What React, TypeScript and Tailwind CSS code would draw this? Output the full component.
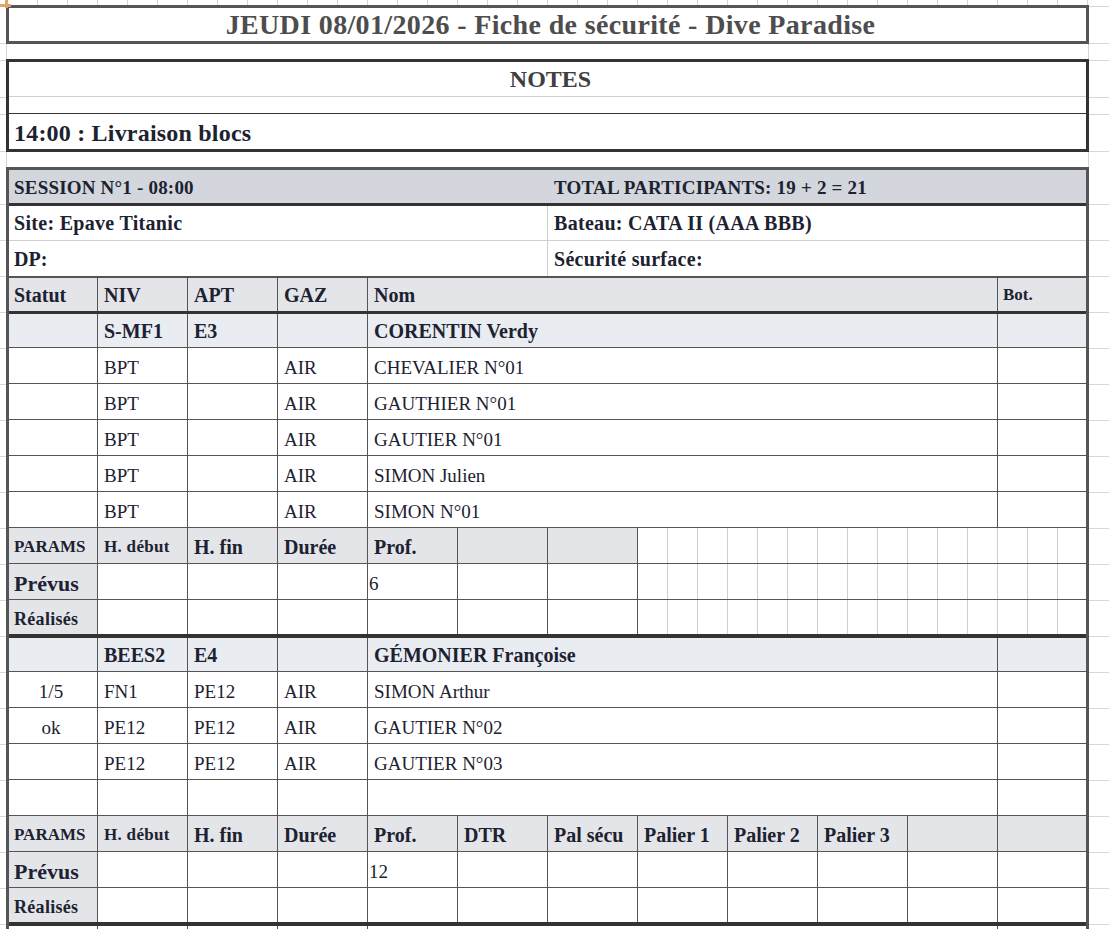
import React from 'react'

type Cell = {
  text?: string
  span?: number
  cls?: string
  grid?: boolean
}

const spans: Record<number, string> = {
  1: 'col-span-1',
  2: 'col-span-2',
  5: 'col-span-5',
  6: 'col-span-6',
  7: 'col-span-7',
}

const GRAY = 'bg-[#e4e5e9]'
const MON = 'bg-[#e9ecf1]'

// 15 petites cellules claires (colonnes de 30px du tableur)
const LightGrid = () => (
  <div className="flex h-full w-full">
    {Array.from({ length: 15 }).map((_, i) => (
      <div key={i} className={i < 14 ? 'w-[30px] shrink-0 border-r border-[#cfcfcf]' : 'flex-1'} />
    ))}
  </div>
)

const Row = ({ cells, className }: { cells: Cell[]; className: string }) => (
  <div className={`grid grid-cols-[89px_repeat(10,90px)_88px] ${className}`}>
    {cells.map((c, i) => (
      <div
        key={i}
        className={`${spans[c.span ?? 1]} flex min-w-0 items-center overflow-hidden whitespace-nowrap ${
          i < cells.length - 1 ? 'border-r border-[#555]' : ''
        } ${c.grid ? '' : c.cls ?? 'pl-[6px]'}`}
      >
        {c.grid ? <LightGrid /> : c.text}
      </div>
    ))}
  </div>
)

const b = 'font-bold text-[20px]'
const r = 'text-[19px] pt-[6px]'

const person = (statut: string, niv: string, apt: string, gaz: string, nom: string): Cell[] => [
  { text: statut, cls: `${r} justify-center pr-[4px]` },
  { text: niv, cls: `${r} pl-[6px]` },
  { text: apt, cls: `${r} pl-[6px]` },
  { text: gaz, cls: `${r} pl-[6px]` },
  { text: nom, span: 7, cls: `${r} pl-[6px]` },
  { text: '' },
]

const moniteur = (niv: string, apt: string, nom: string): Cell[] => [
  { text: '' },
  { text: niv, cls: `${b} pl-[6px]` },
  { text: apt, cls: `${b} pl-[6px]` },
  { text: '' },
  { text: nom, span: 7, cls: `${b} pl-[6px]` },
  { text: '' },
]

const rowCls = 'h-[36px] border-b border-[#555]'
const prevus = `pl-[5px] pt-[4px] font-bold text-[22px] ${GRAY}`
const realises = `pl-[5px] pt-[4px] font-bold text-[18px] tracking-[0.3px] ${GRAY}`

export default function App() {
  return (
    <div className="relative h-[929px] w-[1109px] overflow-hidden bg-white font-['Liberation_Serif',serif] text-[#1c2230]">
      {/* marque de sélection */}
      <div className="absolute left-[5px] top-0 h-[8px] w-[3px] bg-[#e0a56c]" />
      <div className="absolute left-0 top-[4px] h-[3px] w-[11px] bg-[#e0a56c]" />

      {/* bande du haut avec le quadrillage */}
      <div className="h-[5px] [background-image:linear-gradient(to_right,#d4d4d4_1px,transparent_1px)] [background-size:30px_100%] [background-position:7px_0]" />

      {/* Titre + notes */}
      <div className="flex">
        <div className="w-[6px] [background-image:repeating-linear-gradient(to_bottom,#d6d6d6_0_1px,transparent_1px_37px,#d6d6d6_37px_38px,transparent_38px_54px)] [background-position:0_1px]" />
        <div className="flex w-[1083px] flex-col">
          <div className="flex h-[39px] items-center justify-center border-[3px] border-[#555] pl-[6px] text-[28px] font-bold tracking-[0.35px] text-[#4d4d4d]">
            JEUDI 08/01/2026 - Fiche de sécurité - Dive Paradise
          </div>
          <div className="h-[15px] border-x border-[#d6d6d6]" />
          <div className="flex flex-col border-[3px] border-[#333]">
            <div className="flex h-[35px] items-center justify-center border-b border-[#cfcfcf] pl-[6px] text-[24px] font-bold text-[#3f3f3f]">
              NOTES
            </div>
            <div className="h-[17px] border-b border-[#333]" />
            <div className="flex h-[35px] items-center pl-[5px] pt-[2px] text-[24px] font-bold tracking-[0.2px]">
              14:00 : Livraison blocs
            </div>
          </div>
          <div className="h-[15px] border-x border-[#d6d6d6]" />
        </div>
        <div className="flex-1 [background-image:repeating-linear-gradient(to_bottom,#d6d6d6_0_1px,transparent_1px_37px,#d6d6d6_37px_38px,transparent_38px_54px)] [background-position:0_1px]" />
      </div>

      {/* Session */}
      <div className="flex">
        <div className="w-[6px] [background-image:repeating-linear-gradient(to_bottom,transparent_0_35px,#d6d6d6_35px_36px)] [background-position:0_2px]" />
        <div className="w-[1083px] border-x-[3px] border-t-[3px] border-[#555]">
          <Row
            className="h-[36px] border-b-[3px] border-[#333] bg-[#d3d6dc]"
            cells={[
              { text: 'SESSION N°1 - 08:00', span: 6, cls: 'pl-[5px] pt-[4px] font-bold text-[19px] tracking-[0.2px] !border-r-0' },
              { text: 'TOTAL PARTICIPANTS: 19 + 2 = 21', span: 6, cls: 'pl-[6px] pt-[4px] font-bold text-[19px] tracking-[0.2px]' },
            ]}
          />
          <Row
            className="h-[35px] border-b border-[#cfcfcf]"
            cells={[
              { text: 'Site: Epave Titanic', span: 6, cls: `pl-[5px] ${b} tracking-[0.3px] !border-[#cfcfcf]` },
              { text: 'Bateau: CATA II (AAA BBB)', span: 6, cls: `pl-[6px] ${b} tracking-[0.3px]` },
            ]}
          />
          <Row
            className="h-[37px] border-b-2 border-[#555]"
            cells={[
              { text: 'DP:', span: 6, cls: `pl-[5px] ${b} !border-[#cfcfcf]` },
              { text: 'Sécurité surface:', span: 6, cls: `pl-[6px] ${b} tracking-[0.3px]` },
            ]}
          />
          <Row
            className={`h-[36px] border-b-[3px] border-[#333] ${GRAY}`}
            cells={[
              { text: 'Statut', cls: `pl-[5px] ${b}` },
              { text: 'NIV', cls: `pl-[6px] ${b}` },
              { text: 'APT', cls: `pl-[6px] ${b}` },
              { text: 'GAZ', cls: `pl-[6px] ${b}` },
              { text: 'Nom', span: 7, cls: `pl-[6px] ${b}` },
              { text: 'Bot.', cls: 'pl-[5px] font-bold text-[17px]' },
            ]}
          />

          {/* Palanquée 1 */}
          <Row className={`h-[34px] border-b border-[#555] ${MON}`} cells={moniteur('S-MF1', 'E3', 'CORENTIN Verdy')} />
          <Row className={rowCls} cells={person('', 'BPT', '', 'AIR', 'CHEVALIER N°01')} />
          <Row className={rowCls} cells={person('', 'BPT', '', 'AIR', 'GAUTHIER N°01')} />
          <Row className={rowCls} cells={person('', 'BPT', '', 'AIR', 'GAUTIER N°01')} />
          <Row className={rowCls} cells={person('', 'BPT', '', 'AIR', 'SIMON Julien')} />
          <Row className={rowCls} cells={person('', 'BPT', '', 'AIR', 'SIMON N°01')} />
          <Row
            className={rowCls}
            cells={[
              { text: 'PARAMS', cls: `pl-[5px] pt-[2px] font-bold text-[17px] ${GRAY}` },
              { text: 'H. début', cls: `pl-[6px] pt-[2px] font-bold text-[17px] tracking-[0.3px] ${GRAY}` },
              { text: 'H. fin', cls: `pl-[6px] pt-[2px] ${b} ${GRAY}` },
              { text: 'Durée', cls: `pl-[6px] pt-[2px] ${b} ${GRAY}` },
              { text: 'Prof.', cls: `pl-[6px] pt-[2px] ${b} ${GRAY}` },
              { text: '', cls: GRAY },
              { text: '', cls: GRAY },
              { span: 5, grid: true },
            ]}
          />
          <Row
            className={rowCls}
            cells={[
              { text: 'Prévus', cls: prevus },
              { text: '' },
              { text: '' },
              { text: '' },
              { text: '6', cls: 'pl-[1px] pt-[6px] text-[19px]' },
              { text: '' },
              { text: '' },
              { span: 5, grid: true },
            ]}
          />
          <Row
            className="h-[38px] border-b-4 border-[#333]"
            cells={[
              { text: 'Réalisés', cls: realises },
              { text: '' },
              { text: '' },
              { text: '' },
              { text: '' },
              { text: '' },
              { text: '' },
              { span: 5, grid: true },
            ]}
          />

          {/* Palanquée 2 */}
          <Row className={`h-[34px] border-b border-[#555] ${MON}`} cells={moniteur('BEES2', 'E4', 'GÉMONIER Françoise')} />
          <Row className={rowCls} cells={person('1/5', 'FN1', 'PE12', 'AIR', 'SIMON Arthur')} />
          <Row className={rowCls} cells={person('ok', 'PE12', 'PE12', 'AIR', 'GAUTIER N°02')} />
          <Row className={rowCls} cells={person('', 'PE12', 'PE12', 'AIR', 'GAUTIER N°03')} />
          <Row className={rowCls} cells={person('', '', '', '', '')} />
          <Row
            className={`${rowCls} ${GRAY}`}
            cells={[
              { text: 'PARAMS', cls: 'pl-[5px] pt-[2px] font-bold text-[17px]' },
              { text: 'H. début', cls: 'pl-[6px] pt-[2px] font-bold text-[17px] tracking-[0.3px]' },
              { text: 'H. fin', cls: `pl-[6px] pt-[2px] ${b}` },
              { text: 'Durée', cls: `pl-[6px] pt-[2px] ${b}` },
              { text: 'Prof.', cls: `pl-[6px] pt-[2px] ${b}` },
              { text: 'DTR', cls: `pl-[6px] pt-[2px] ${b}` },
              { text: 'Pal sécu', cls: `pl-[6px] pt-[2px] ${b}` },
              { text: 'Palier 1', cls: `pl-[6px] pt-[2px] ${b}` },
              { text: 'Palier 2', cls: `pl-[6px] pt-[2px] ${b}` },
              { text: 'Palier 3', cls: `pl-[6px] pt-[2px] ${b}` },
              { text: '' },
              { text: '' },
            ]}
          />
          <Row
            className={rowCls}
            cells={[
              { text: 'Prévus', cls: prevus },
              { text: '' },
              { text: '' },
              { text: '' },
              { text: '12', cls: 'pl-[1px] pt-[6px] text-[19px]' },
              { text: '' },
              { text: '' },
              { text: '' },
              { text: '' },
              { text: '' },
              { text: '' },
              { text: '' },
            ]}
          />
          <Row
            className="h-[38px] border-b-4 border-[#333]"
            cells={[
              { text: 'Réalisés', cls: realises },
              { text: '' },
              { text: '' },
              { text: '' },
              { text: '' },
              { text: '' },
              { text: '' },
              { text: '' },
              { text: '' },
              { text: '' },
              { text: '' },
              { text: '' },
            ]}
          />
          <Row className={rowCls} cells={person('', '', '', '', '')} />
        </div>
        <div className="flex-1 [background-image:repeating-linear-gradient(to_bottom,transparent_0_35px,#d6d6d6_35px_36px)] [background-position:0_2px]" />
      </div>
    </div>
  )
}
